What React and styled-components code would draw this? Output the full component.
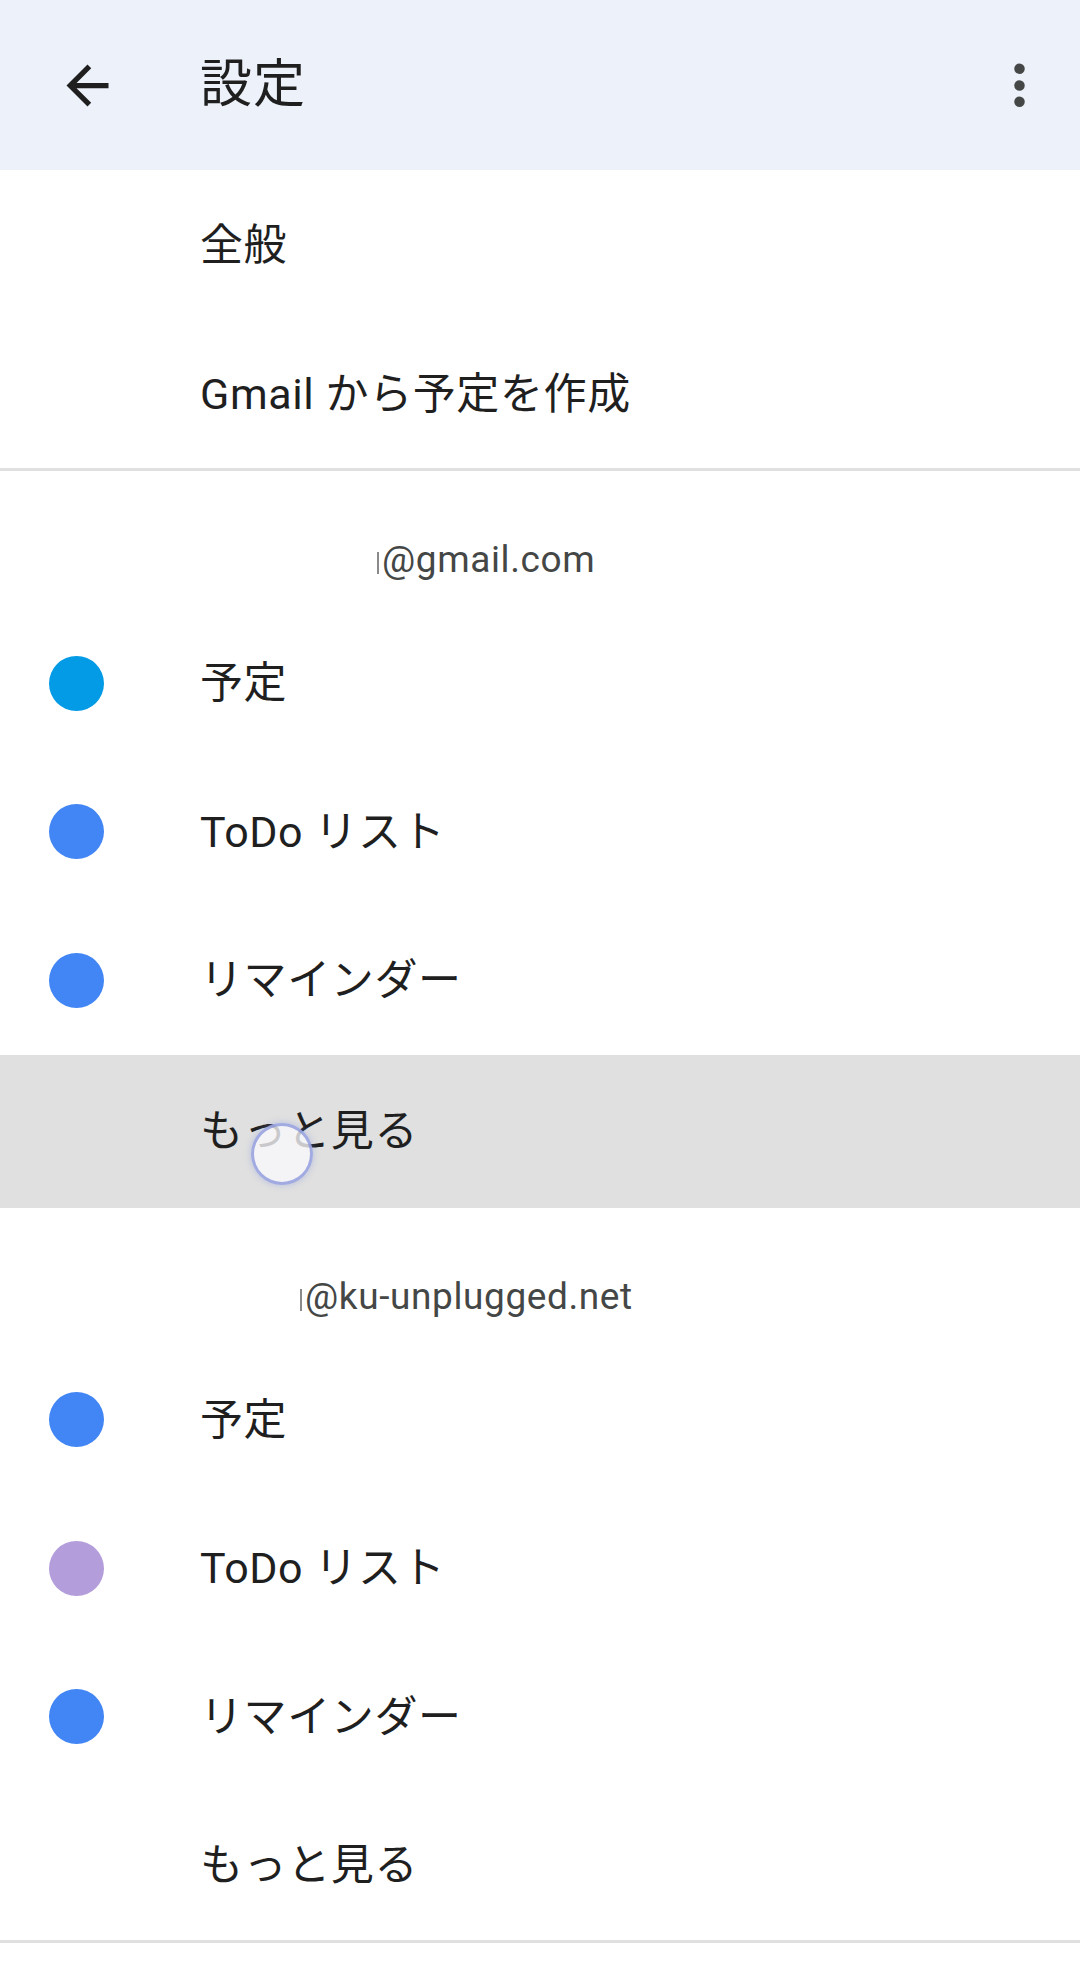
import React from "react"
import styled, { createGlobalStyle } from "styled-components"

const GlobalStyle = createGlobalStyle`
  html, body {
    margin: 0;
    padding: 0;
    background: #ffffff;
  }
  body {
    font-family: Roboto, "Noto Sans CJK JP", sans-serif;
    color: #1f1f1f;
  }
`

const sections = [
  {
    email: "@gmail.com",
    indent: 382,
    items: [
      { label: "予定", color: "#039be5" },
      { label: "ToDo リスト", color: "#4285f4" },
      { label: "リマインダー", color: "#4285f4" },
      { label: "もっと見る", pressed: true },
    ],
  },
  {
    email: "@ku-unplugged.net",
    indent: 305,
    items: [
      { label: "予定", color: "#4285f4" },
      { label: "ToDo リスト", color: "#b39ddb" },
      { label: "リマインダー", color: "#4285f4" },
      { label: "もっと見る" },
    ],
  },
]

const BackIcon = () => (
  <svg width="63" height="63" viewBox="0 0 24 24" fill="#1f1f1f">
    <path d="M20 11H7.83l5.59-5.59L12 4l-8 8 8 8 1.41-1.41L7.83 13H20v-2z" />
  </svg>
)

const MoreIcon = () => (
  <svg width="63" height="63" viewBox="0 0 24 24" fill="#444746">
    <circle cx="12" cy="5.6" r="2" />
    <circle cx="12" cy="12" r="2" />
    <circle cx="12" cy="18.2" r="2" />
  </svg>
)

const App = () => {
  return (
    <Page>
      <GlobalStyle />
      <Header>
        <IconButton>
          <BackIcon />
        </IconButton>
        <Title>設定</Title>
        <IconButton>
          <MoreIcon />
        </IconButton>
      </Header>

      <List>
        <Row>
          <Lead />
          <Label>全般</Label>
        </Row>
        <Row>
          <Lead />
          <Label>Gmail から予定を作成</Label>
        </Row>
      </List>

      <Divider />

      {sections.map((section, i) => (
        <Section key={i}>
          <AccountLabel $indent={section.indent}>
            <Sliver />
            {section.email}
          </AccountLabel>
          {section.items.map((item, j) => (
            <Row key={j} $pressed={item.pressed}>
              <Lead>{item.color && <Dot $color={item.color} />}</Lead>
              <Label>{item.label}</Label>
              {item.pressed && <Touch />}
            </Row>
          ))}
        </Section>
      ))}

      <Divider />
    </Page>
  )
}

export default App

const Page = styled.div`
  width: 1080px;
  min-height: 1969px;
  background: #ffffff;
`

const Header = styled.div`
  height: 170px;
  background: #edf2fa;
  display: flex;
  align-items: center;
  padding: 0 29px 0 56px;
  box-sizing: border-box;
`

const IconButton = styled.div`
  width: 63px;
  height: 63px;
  display: flex;
  align-items: center;
  justify-content: center;
  flex-shrink: 0;
`

const Title = styled.div`
  flex: 1;
  margin-left: 81px;
  font-size: 52px;
  line-height: 63px;
  color: #1f1f1f;
  letter-spacing: 1px;
  padding-bottom: 2px;
`

const List = styled.div`
  padding-top: 1px;
`

const Section = styled.div`
  display: flex;
  flex-direction: column;
`

const Row = styled.div`
  position: relative;
  height: ${props => (props.$pressed ? "153px" : "148.5px")};
  flex-shrink: 0;
  display: flex;
  align-items: center;
  background: ${props => (props.$pressed ? "#e0e0e0" : "transparent")};
`

const Lead = styled.div`
  width: 200px;
  flex-shrink: 0;
  display: flex;
  align-items: center;
  padding-left: 49px;
  box-sizing: border-box;
`

const Dot = styled.div`
  width: 55px;
  height: 55px;
  border-radius: 50%;
  background: ${props => props.$color};
`

const Label = styled.div`
  font-size: 43px;
  line-height: 56px;
  letter-spacing: 0.6px;
  color: #1f1f1f;
`

const AccountLabel = styled.div`
  padding: 62px 0 22px ${props => props.$indent}px;
  font-size: 37px;
  line-height: 54px;
  letter-spacing: 0.6px;
  color: #444746;
  display: flex;
  align-items: center;
`

const Sliver = styled.span`
  display: inline-block;
  width: 2px;
  height: 22px;
  margin: 6px 3px 0 -5px;
  background: #8a8a8a;
`

const Divider = styled.div`
  height: 3px;
  background: #e0e0e0;
`

const Touch = styled.div`
  position: absolute;
  left: 251px;
  top: 68px;
  width: 56px;
  height: 56px;
  border-radius: 50%;
  background: rgba(250, 250, 252, 0.78);
  border: 3px solid rgba(125, 140, 215, 0.7);
  box-shadow: 0 0 7px rgba(120, 140, 220, 0.4);
`
